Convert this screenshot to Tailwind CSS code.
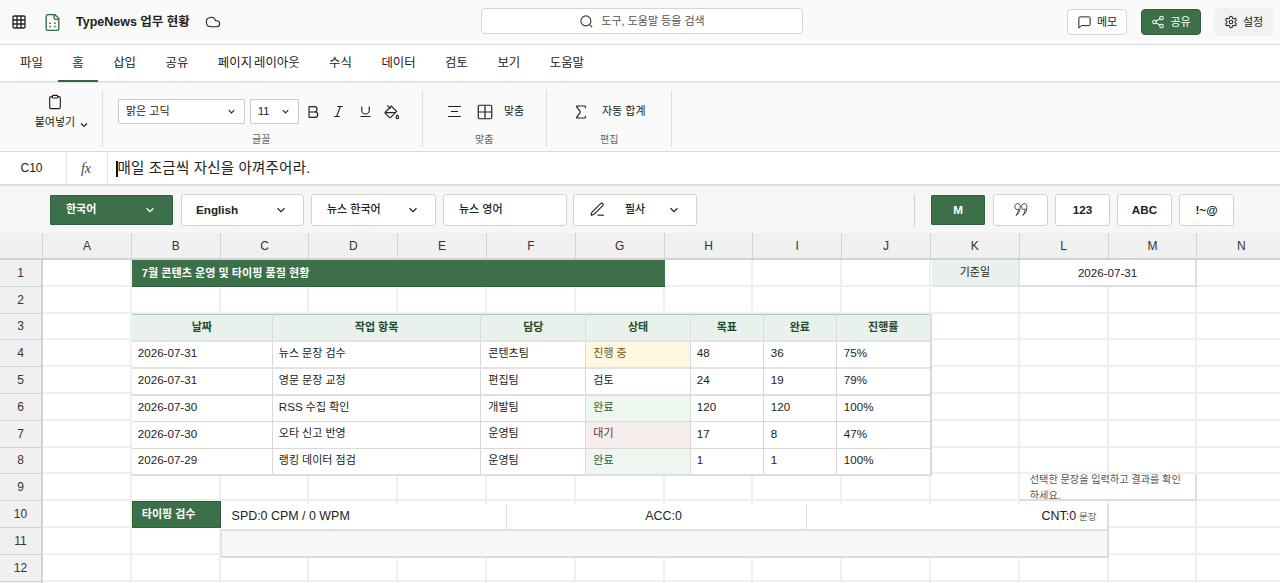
<!DOCTYPE html>
<html lang="ko">
<head>
  <meta charset="UTF-8" />
  <title>TypeNews 업무 현황</title>
  <script src="https://cdn.jsdelivr.net/npm/@tailwindcss/browser@4"></script>
</head>
<body class="h-[583px] overflow-hidden bg-white font-['Liberation_Sans','Noto_Sans_CJK_KR',sans-serif] text-[#222]">
  <!-- Top bar -->
  <header class="h-[45px] bg-[#fafafa] border-b border-[#d9d9d9] flex items-center relative">
    <svg class="ml-[11px] w-[16px] h-[16px]" viewBox="0 0 24 24" fill="none" stroke="#222" stroke-width="2"><rect x="3" y="3" width="18" height="18" rx="2"/><path d="M3 9h18M3 15h18M9 3v18M15 3v18"/></svg>
    <svg class="ml-[16px] w-[19px] h-[19px]" viewBox="0 0 24 24" fill="none" stroke="#2f6b41" stroke-width="1.7"><path d="M15 2H6a2 2 0 0 0-2 2v16a2 2 0 0 0 2 2h12a2 2 0 0 0 2-2V7Z"/><path d="M14 2v4a2 2 0 0 0 2 2h4"/><path d="M8 13h2M14 13h2M8 17h2M14 17h2"/></svg>
    <span class="ml-[14px] text-[12.5px] font-bold">TypeNews 업무 현황</span>
    <svg class="ml-[15px] w-[16px] h-[16px]" viewBox="0 0 24 24" fill="none" stroke="#222" stroke-width="1.6"><path d="M17.5 19H9a7 7 0 1 1 6.71-9h1.79a4.5 4.5 0 1 1 0 9Z"/></svg>
    <div class="absolute left-[481px] top-[8px] w-[322px] h-[26px] bg-white border border-[#d4d4d4] rounded-[4px] flex items-center justify-center gap-[7px] text-[11px] text-[#555]">
      <svg class="w-[15px] h-[15px]" viewBox="0 0 24 24" fill="none" stroke="#333" stroke-width="1.7"><circle cx="11" cy="11" r="8"/><path d="m21 21-4.3-4.3"/></svg>
      <span>도구, 도움말 등을 검색</span>
    </div>
    <div class="ml-auto mr-[7px] flex items-center text-[11px]">
      <button class="w-[60px] h-[26px] bg-white border border-[#d4d4d4] rounded-[4px] flex items-center justify-center gap-[5px]">
        <svg class="w-[15px] h-[15px]" viewBox="0 0 24 24" fill="none" stroke="#222" stroke-width="1.6"><path d="M21 15a2 2 0 0 1-2 2H7l-4 4V5a2 2 0 0 1 2-2h14a2 2 0 0 1 2 2z"/></svg>메모
      </button>
      <button class="ml-[14px] w-[60px] h-[26px] bg-[#3b7049] border border-[#2f5f3c] rounded-[4px] text-white flex items-center justify-center gap-[5px]">
        <svg class="w-[14px] h-[14px]" viewBox="0 0 24 24" fill="none" stroke="#fff" stroke-width="1.8"><circle cx="18" cy="5" r="3"/><circle cx="6" cy="12" r="3"/><circle cx="18" cy="19" r="3"/><path d="m8.59 13.51 6.83 3.98M15.41 6.51l-6.82 3.98"/></svg>공유
      </button>
      <button class="ml-[13px] w-[59px] h-[28px] bg-[#f1f1f1] rounded-[4px] flex items-center justify-center gap-[5px]">
        <svg class="w-[14px] h-[14px]" viewBox="0 0 24 24" fill="none" stroke="#222" stroke-width="1.8"><path d="M12.22 2h-.44a2 2 0 0 0-2 2v.18a2 2 0 0 1-1 1.73l-.43.25a2 2 0 0 1-2 0l-.15-.08a2 2 0 0 0-2.73.73l-.22.38a2 2 0 0 0 .73 2.73l.15.1a2 2 0 0 1 1 1.72v.51a2 2 0 0 1-1 1.74l-.15.09a2 2 0 0 0-.73 2.73l.22.38a2 2 0 0 0 2.73.73l.15-.08a2 2 0 0 1 2 0l.43.25a2 2 0 0 1 1 1.73V20a2 2 0 0 0 2 2h.44a2 2 0 0 0 2-2v-.18a2 2 0 0 1 1-1.73l.43-.25a2 2 0 0 1 2 0l.15.08a2 2 0 0 0 2.73-.73l.22-.39a2 2 0 0 0-.73-2.73l-.15-.08a2 2 0 0 1-1-1.74v-.5a2 2 0 0 1 1-1.74l.15-.09a2 2 0 0 0 .73-2.73l-.22-.38a2 2 0 0 0-2.73-.73l-.15.08a2 2 0 0 1-2 0l-.43-.25a2 2 0 0 1-1-1.73V4a2 2 0 0 0-2-2z"/><circle cx="12" cy="12" r="3"/></svg>설정
      </button>
    </div>
  </header>

  <!-- Tabs -->
  <nav class="h-[38px] bg-white border-b-2 border-[#e3e3e3] flex pl-[5.250px] text-[12.4px]">
    <a class="px-[14.750px] pt-[9px]">파일</a>
    <a class="px-[14.750px] pt-[9px] h-[37px] text-[#2f6b41] border-b-2 border-[#2f6b41] font-medium">홈</a>
    <a class="px-[14.750px] pt-[9px]">삽입</a>
    <a class="px-[14.750px] pt-[9px]">공유</a>
    <a class="px-[14.750px] pt-[9px] [word-spacing:-1.500px]">페이지 레이아웃</a>
    <a class="px-[14.750px] pt-[9px]">수식</a>
    <a class="px-[14.750px] pt-[9px]">데이터</a>
    <a class="px-[14.750px] pt-[9px]">검토</a>
    <a class="px-[14.750px] pt-[9px]">보기</a>
    <a class="px-[14.750px] pt-[9px]">도움말</a>
  </nav>

  <!-- Ribbon -->
  <section class="h-[69px] bg-[#fafafa] border-b border-[#d9d9d9] flex pt-[7px] pb-[4px]">
    <div class="w-[103px] border-r border-[#dedede] flex flex-col items-center pt-[4px] pl-[23px]">
      <svg class="w-[16px] h-[16px] mr-[16px]" viewBox="0 0 24 24" fill="none" stroke="#222" stroke-width="1.7"><rect x="8" y="2" width="8" height="4" rx="1"/><path d="M16 4h2a2 2 0 0 1 2 2v14a2 2 0 0 1-2 2H6a2 2 0 0 1-2-2V6a2 2 0 0 1 2-2h2"/></svg>
      <span class="mt-[3px] text-[11px] flex items-center gap-[3px]">붙여넣기
        <svg class="w-[12px] h-[12px] mt-[6px]" viewBox="0 0 24 24" fill="none" stroke="#222" stroke-width="2.400"><path d="m6 9 6 6 6-6"/></svg>
      </span>
    </div>
    <div class="w-[320px] border-r border-[#dedede] flex flex-col pl-[15px]">
      <div class="h-[25px] mt-[9px] flex items-center text-[11px]">
        <div class="w-[127px] h-[25px] bg-white border border-[#c9c9c9] rounded-[1px] flex items-center justify-between pl-[7px] pr-[7px]">맑은 고딕
          <svg class="w-[11px] h-[11px]" viewBox="0 0 24 24" fill="none" stroke="#222" stroke-width="2.400"><path d="m6 9 6 6 6-6"/></svg>
        </div>
        <div class="ml-[5px] w-[49px] h-[25px] bg-white border border-[#c9c9c9] rounded-[1px] flex items-center justify-between pl-[7px] pr-[7px]">11
          <svg class="w-[11px] h-[11px]" viewBox="0 0 24 24" fill="none" stroke="#222" stroke-width="2.400"><path d="m6 9 6 6 6-6"/></svg>
        </div>
        <svg class="ml-[6px] w-[16px] h-[16px]" viewBox="0 0 24 24" fill="none" stroke="#222" stroke-width="1.8"><path d="M6 12h9a4 4 0 0 1 0 8H7a1 1 0 0 1-1-1V5a1 1 0 0 1 1-1h7a4 4 0 0 1 0 8"/></svg>
        <svg class="ml-[10px] w-[15px] h-[15px]" viewBox="0 0 24 24" fill="none" stroke="#222" stroke-width="1.8"><path d="M19 4h-9M14 20H5M15 4 9 20"/></svg>
        <svg class="ml-[12px] w-[15px] h-[15px]" viewBox="0 0 24 24" fill="none" stroke="#222" stroke-width="1.8"><path d="M6 4v6a6 6 0 0 0 12 0V4M4 20h16"/></svg>
        <svg class="ml-[11px] w-[16px] h-[16px]" viewBox="0 0 24 24" fill="none" stroke="#222" stroke-width="1.8"><path d="m19 11-8-8-8.600 8.600a2 2 0 0 0 0 2.800l5.200 5.200c.8.8 2 .8 2.800 0L19 11Z"/><path d="m5 2 5 5M2 13h15M22 20a2 2 0 1 1-4 0c0-1.600 1.700-2.400 2-4 .3 1.600 2 2.400 2 4Z"/></svg>
      </div>
      <span class="mt-[8px] pl-[134px] text-[10px] text-[#666]">글꼴</span>
    </div>
    <div class="w-[124px] border-r border-[#dedede] flex flex-col pl-[23px]">
      <div class="h-[25px] mt-[9px] flex items-center text-[11px]">
        <svg class="w-[17px] h-[17px]" viewBox="0 0 24 24" fill="none" stroke="#222" stroke-width="1.6"><path d="M3 5h18M7 12h10M3 19h18"/></svg>
        <svg class="ml-[13px] w-[18px] h-[18px]" viewBox="0 0 24 24" fill="none" stroke="#222" stroke-width="1.6"><rect x="3" y="3" width="18" height="18" rx="2"/><path d="M12 3v18M3 12h18"/></svg>
        <span class="ml-[10px]">맞춤</span>
      </div>
      <span class="mt-[8px] pl-[29px] text-[10px] text-[#666]">맞춤</span>
    </div>
    <div class="w-[125px] border-r border-[#dedede] flex flex-col pl-[25px]">
      <div class="h-[25px] mt-[9px] flex items-center text-[11px]">
        <svg class="w-[18px] h-[18px]" viewBox="0 0 24 24" fill="none" stroke="#222" stroke-width="1.6"><path d="M18 7V5a1 1 0 0 0-1-1H6.500a.5.5 0 0 0-.4.8l4.500 6a2 2 0 0 1 0 2.400l-4.500 6a.5.5 0 0 0 .4.8H17a1 1 0 0 0 1-1v-2"/></svg>
        <span class="ml-[12px]">자동 합계</span>
      </div>
      <span class="mt-[8px] pl-[28px] text-[10px] text-[#666]">편집</span>
    </div>
  </section>

  <!-- Formula bar -->
  <section class="h-[34px] bg-white border-b-2 border-[#dcdcdc] flex items-stretch">
    <div class="w-[67px] border-r border-[#e5e5e5] flex items-center justify-center text-[12px] pr-[3px]">C10</div>
    <div class="w-[41px] border-r border-[#e5e5e5] flex items-center justify-center pr-[2px] font-['Liberation_Serif',serif] italic text-[14px] text-[#444]">fx</div>
    <div class="flex-1 flex items-center pl-[8px] pt-[1px] text-[14.500px] tracking-[0.200px]"><span class="w-[1.500px] h-[16px] bg-[#111]"></span><span>매일 조금씩 자신을 아껴주어라.</span></div>
  </section>

  <!-- Typing toolbar -->
  <section class="h-[47px] bg-[#f6f6f6] flex items-center pl-[50px] text-[11px] font-medium">
    <div class="w-[123px] h-[30px] bg-[#3b7049] border border-[#30603d] rounded-[1px] text-white font-bold flex items-center justify-between pl-[15px] pr-[15px]">한국어
      <svg class="w-[14px] h-[14px]" viewBox="0 0 24 24" fill="none" stroke="#fff" stroke-width="2"><path d="m6 9 6 6 6-6"/></svg>
    </div>
    <div class="ml-[8px] w-[123px] h-[32px] bg-white border border-[#d2d2d2] rounded-[3px] font-bold text-[11.700px] flex items-center justify-between pl-[14px] pr-[15px]">English
      <svg class="w-[14px] h-[14px]" viewBox="0 0 24 24" fill="none" stroke="#222" stroke-width="2"><path d="m6 9 6 6 6-6"/></svg>
    </div>
    <div class="ml-[7px] w-[125px] h-[32px] bg-white border border-[#d2d2d2] rounded-[3px] flex items-center justify-between pl-[15px] pr-[15px]">뉴스 한국어
      <svg class="w-[14px] h-[14px]" viewBox="0 0 24 24" fill="none" stroke="#222" stroke-width="2"><path d="m6 9 6 6 6-6"/></svg>
    </div>
    <div class="ml-[7px] w-[124px] h-[32px] bg-white border border-[#d2d2d2] rounded-[3px] flex items-center pl-[15px]">뉴스 영어</div>
    <div class="ml-[6px] w-[124px] h-[32px] bg-white border border-[#d2d2d2] rounded-[3px] flex items-center pl-[15px] pr-[15px]">
      <svg class="w-[17px] h-[17px]" viewBox="0 0 24 24" fill="none" stroke="#222" stroke-width="1.6"><path d="M12 20h9"/><path d="M16.376 3.622a1 1 0 0 1 3.002 3.002L7.368 18.635a2 2 0 0 1-.855.506l-2.872.838a.5.5 0 0 1-.62-.62l.838-2.872a2 2 0 0 1 .506-.854z"/></svg>
      <span class="ml-[19px]">필사</span>
      <svg class="ml-auto w-[14px] h-[14px]" viewBox="0 0 24 24" fill="none" stroke="#222" stroke-width="2"><path d="m6 9 6 6 6-6"/></svg>
    </div>
    <div class="ml-[217px] w-px h-[32px] bg-[#d2d2d2]"></div>
    <div class="ml-[16px] w-[54px] h-[30px] bg-[#3b7049] border border-[#30603d] rounded-[1px] text-white font-bold text-[11.700px] flex items-center justify-center">M</div>
    <div class="ml-[8px] w-[55px] h-[32px] bg-white border border-[#d2d2d2] rounded-[3px] flex items-center justify-center">
      <svg class="w-[14px] h-[15px]" viewBox="0 0 24 24" fill="none" stroke="#222" stroke-width="1.500"><path d="M6.500 2C3.500 2 1.500 4 1.500 7c0 3 1.500 5 3.500 5 1 0 2-.5 2.500-1 0 4-1.500 8-4 11 4-2 7-7 7-13V7c0-3-1-5-4-5Z"/><path d="M18 2c-3 0-5 2-5 5 0 3 1.500 5 3.500 5 1 0 2-.5 2.500-1 0 4-1.500 8-4 11 4-2 7-7 7-13V7c0-3-1-5-4-5Z"/></svg>
    </div>
    <div class="ml-[7px] w-[55px] h-[32px] bg-white border border-[#d2d2d2] rounded-[3px] font-bold text-[11.700px] flex items-center justify-center">123</div>
    <div class="ml-[7px] w-[55px] h-[32px] bg-white border border-[#d2d2d2] rounded-[3px] font-bold text-[11.700px] flex items-center justify-center">ABC</div>
    <div class="ml-[7px] w-[55px] h-[32px] bg-white border border-[#d2d2d2] rounded-[3px] font-bold text-[11.700px] flex items-center justify-center">!~@</div>
  </section>

  <!-- Sheet -->
  <main class="relative">
    <div id="cells" class="grid grid-cols-[43px_repeat(14,88.800px)] grid-rows-[27px_repeat(13,26.800px)] text-[12px]"></div>

    <!-- Merged cells and blocks that sit over the grid -->
    <div class="absolute inset-0 grid grid-cols-[43px_repeat(14,88.800px)] grid-rows-[27px_repeat(13,26.800px)] text-[11.600px]">
      <div class="col-[3/9] row-[2/3] bg-[#3b7049] border-b border-[#2f5f3c] text-white font-bold flex items-center pl-[10px] text-[11.100px]">7월 콘텐츠 운영 및 타이핑 품질 현황</div>
      <div class="col-[12/13] row-[2/3] bg-[#e8f1ec] border-b-2 border-r-2 border-[#e3e3e3] flex items-center justify-center ml-[1px] text-[11px]">기준일</div>
      <div class="col-[13/15] row-[2/3] bg-white border-r-2 border-b-2 border-[#dddddd] flex items-center justify-center">2026-07-31</div>

      <table class="col-[3/12] row-[4/10] w-[799px] h-[161px] table-fixed border-collapse self-start">
        <colgroup>
          <col class="w-[140.500px]" /><col class="w-[208.500px]" /><col class="w-[105px]" /><col class="w-[104.500px]" /><col class="w-[73px]" /><col class="w-[73px]" /><col class="w-[94.500px]" />
        </colgroup>
        <thead>
          <tr class="h-[27px] bg-[#e8f1ec] text-[#1f4a2c] border-t border-[#a9c7b3] border-b-2 border-b-[#dfe6e1] text-[11px] font-bold">
            <th class="border-r border-[#d8dfda] font-bold">날짜</th>
            <th class="border-r border-[#d8dfda] font-bold">작업 항목</th>
            <th class="border-r border-[#d8dfda] font-bold">담당</th>
            <th class="border-r border-[#d8dfda] font-bold">상태</th>
            <th class="border-r border-[#d8dfda] font-bold">목표</th>
            <th class="border-r border-[#d8dfda] font-bold">완료</th>
            <th class="border-r-2 border-[#d8dfda] font-bold">진행률</th>
          </tr>
        </thead>
        <tbody class="bg-white [&_td]:pb-[3px]">
          <tr class="h-[26.800px] border-b-2 border-[#e3e3e3]">
            <td class="pl-[6px] border-r border-[#d8d8d8]">2026-07-31</td><td class="pl-[6px] border-r border-[#d8d8d8] text-[11px]">뉴스 문장 검수</td><td class="pl-[7px] border-r border-[#d8d8d8] text-[11px]">콘텐츠팀</td><td class="pl-[7px] border-r border-[#d8d8d8] text-[11px] bg-[#fff7e0] text-[#7a5410]">진행 중</td><td class="pl-[6px] border-r border-[#d8d8d8]">48</td><td class="pl-[7px] border-r border-[#d8d8d8]">36</td><td class="pl-[7px] border-r-2 border-[#d8d8d8]">75%</td>
          </tr>
          <tr class="h-[26.800px] border-b-2 border-[#dedede]">
            <td class="pl-[6px] border-r border-[#d8d8d8]">2026-07-31</td><td class="pl-[6px] border-r border-[#d8d8d8] text-[11px]">영문 문장 교정</td><td class="pl-[7px] border-r border-[#d8d8d8] text-[11px]">편집팀</td><td class="pl-[7px] border-r border-[#d8d8d8] text-[11px]">검토</td><td class="pl-[6px] border-r border-[#d8d8d8]">24</td><td class="pl-[7px] border-r border-[#d8d8d8]">19</td><td class="pl-[7px] border-r-2 border-[#d8d8d8]">79%</td>
          </tr>
          <tr class="h-[26.800px] border-b border-[#d8d8d8]">
            <td class="pl-[6px] border-r border-[#d8d8d8]">2026-07-30</td><td class="pl-[6px] border-r border-[#d8d8d8]">RSS <span class="text-[11px]">수집 확인</span></td><td class="pl-[7px] border-r border-[#d8d8d8] text-[11px]">개발팀</td><td class="pl-[7px] border-r border-[#d8d8d8] text-[11px] bg-[#edf6ef] text-[#1f5c33]">완료</td><td class="pl-[6px] border-r border-[#d8d8d8]">120</td><td class="pl-[7px] border-r border-[#d8d8d8]">120</td><td class="pl-[7px] border-r-2 border-[#d8d8d8]">100%</td>
          </tr>
          <tr class="h-[26.800px] border-b border-[#d8d8d8]">
            <td class="pl-[6px] border-r border-[#d8d8d8]">2026-07-30</td><td class="pl-[6px] border-r border-[#d8d8d8] text-[11px]">오타 신고 반영</td><td class="pl-[7px] border-r border-[#d8d8d8] text-[11px]">운영팀</td><td class="pl-[7px] border-r border-[#d8d8d8] text-[11px] bg-[#f7eded] text-[#6b3232]">대기</td><td class="pl-[6px] border-r border-[#d8d8d8]">17</td><td class="pl-[7px] border-r border-[#d8d8d8]">8</td><td class="pl-[7px] border-r-2 border-[#d8d8d8]">47%</td>
          </tr>
          <tr class="h-[26.800px] border-b-2 border-[#dedede]">
            <td class="pl-[6px] border-r border-[#d8d8d8]">2026-07-29</td><td class="pl-[6px] border-r border-[#d8d8d8] text-[11px]">랭킹 데이터 점검</td><td class="pl-[7px] border-r border-[#d8d8d8] text-[11px]">운영팀</td><td class="pl-[7px] border-r border-[#d8d8d8] text-[11px] bg-[#edf6ef] text-[#1f5c33]">완료</td><td class="pl-[6px] border-r border-[#d8d8d8]">1</td><td class="pl-[7px] border-r border-[#d8d8d8]">1</td><td class="pl-[7px] border-r-2 border-[#d8d8d8]">100%</td>
          </tr>
        </tbody>
      </table>

      <div class="col-[13/15] row-[10/11] bg-white border-r-2 border-b-2 border-[#dddddd] overflow-hidden pl-[10px] pr-[8px] text-[10.150px] leading-[15.500px] text-[#555]"><p class="-mt-[2px]">선택한 문장을 입력하고 결과를 확인하세요.</p></div>

      <div class="col-[3/4] row-[11/12] bg-[#3b7049] border border-[#2f5f3c] text-white font-bold text-[11px] flex items-center pl-[9px]">타이핑 검수</div>
      <div class="col-[4/14] row-[11/13] mt-[3px] flex flex-col self-start border-r-2 border-[#dddddd] text-[12.450px]">
        <div class="h-[27px] bg-white border-b-2 border-[#e0e0e0] flex items-center">
          <div class="w-[286px] h-full border-r border-[#dcdcdc] flex items-center pl-[11px]">SPD:0 CPM / 0 WPM</div>
          <div class="w-[300px] h-full border-r border-[#dcdcdc] flex items-center justify-center pl-[15px]">ACC:0</div>
          <div class="flex-1 h-full flex items-center justify-end pr-[10px]">CNT:0<span class="ml-[3px] text-[9.500px] text-[#666]">문장</span></div>
        </div>
        <div class="h-[27px] bg-[#f7f7f7] border-b-2 border-l border-[#dddddd]"></div>
      </div>
    </div>
  </main>

  <script>
    // column letters, row numbers and empty cells
    const grid = document.getElementById('cells');
    const letters = 'ABCDEFGHIJKLMN'.split('');

    let html = '<div class="bg-[#f0f0f0] border-r border-b-2 border-[#d2d2d2]"></div>';
    letters.forEach((l) => {
      html += `<div class="bg-[#f0f0f0] border-r border-b-2 border-[#d2d2d2] flex items-center justify-center text-[#333]">${l}</div>`;
    });
    for (let r = 1; r <= 13; r++) {
      // row 13 only just starts at the bottom edge of the window
      const label = r < 13 ? r : '';
      html += `<div class="bg-[#f0f0f0] border-r-2 border-b border-[#d2d2d2] flex items-center justify-center text-[#333]">${label}</div>`;
      letters.forEach(() => {
        html += '<div class="border-r-2 border-b-2 border-[#efefef]"></div>';
      });
    }
    grid.innerHTML = html;
  </script>
</body>
</html>
